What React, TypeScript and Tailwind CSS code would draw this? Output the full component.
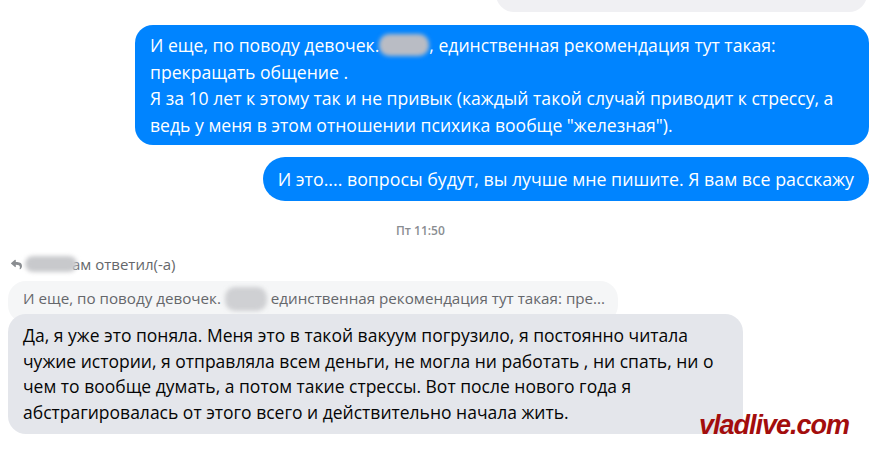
import React from "react";
import { FaReply } from "react-icons/fa";

const font = { fontFamily: '"Open Sans", "Noto Sans", sans-serif' };

function Blob({ className }: { className: string }) {
  return <span className={"inline-block align-middle rounded-[10px] blur-[2px] " + className} />;
}

export default function App() {
  return (
    <div className="relative w-[883px] h-[452px] overflow-hidden bg-white" style={font}>
      {/* top partial bubble */}
      <div className="flex justify-end pr-[16px]">
        <div className="h-[12px] overflow-hidden flex items-end">
          <div className="w-[371px] h-[40px] rounded-[18px] bg-[#f0f0f3]" />
        </div>
      </div>

      {/* outgoing 1 */}
      <div className="flex justify-end pr-[14px] mt-[13px]">
        <div className="w-[734px] rounded-[18px] bg-[#0084ff] text-white text-[17.6px] leading-[26.5px] pl-[15px] py-[7px] whitespace-nowrap">
          И еще, по поводу девочек.<Blob className="w-[50px] h-[22px] bg-[#b9bcc4] -mt-[4px]" />, единственная рекомендация тут такая:
          <br />
          прекращать общение .
          <br />
          Я за 10 лет к этому так и не привык (каждый такой случай приводит к стрессу, а
          <br />
          ведь у меня в этом отношении психика вообще "железная").
        </div>
      </div>

      {/* outgoing 2 */}
      <div className="flex justify-end pr-[14px] mt-[12px]">
        <div className="rounded-[22px] bg-[#0084ff] text-white text-[17.8px] leading-[26px] px-[15px] py-[9px] whitespace-nowrap">
          И это.... вопросы будут, вы лучше мне пишите. Я вам все расскажу
        </div>
      </div>

      {/* timestamp */}
      <div className="mt-[22px] pl-[396px] text-[12px] leading-[16px] font-semibold text-[#8a8d91]">Пт 11:50</div>

      {/* reply header */}
      <div className="mt-[16px] flex items-center pl-[11px] text-[15px] leading-[18px] text-[#65676b]">
        <FaReply className="w-[11px] h-[11px] text-[#8a8d91]" />
        <Blob className="w-[52px] h-[16px] bg-[#c8c9cc] ml-[3px]" />
        <span className="-ml-[5px]">ам ответил(-а)</span>
      </div>

      {/* quoted */}
      <div className="mt-[8px] pl-[8px]">
        <div className="w-[610px] h-[42px] rounded-[18px] bg-[#f5f6f7] pl-[15px] pt-[8px] text-[15.2px] leading-[18px] text-[#65676b] whitespace-nowrap">
          И еще, по поводу девочек. <Blob className="w-[42px] h-[24px] bg-[#cfd0d3] -mt-[2px]" /> единственная рекомендация тут такая: пре...
        </div>
      </div>

      {/* incoming */}
      <div className="-mt-[9px] pl-[8px] relative">
        <div className="w-[735px] rounded-[18px] bg-[#e4e6eb] text-[#050505] text-[17.5px] leading-[25.5px] pl-[15px] py-[9px] whitespace-nowrap">
          Да, я уже это поняла. Меня это в такой вакуум погрузило, я постоянно читала
          <br />
          чужие истории, я отправляла всем деньги, не могла ни работать , ни спать, ни о
          <br />
          чем то вообще думать, а потом такие стрессы. Вот после нового года я
          <br />
          абстрагировалась от этого всего и действительно начала жить.
        </div>
      </div>

      {/* watermark */}
      <div
        className="absolute left-[699px] top-[409px] text-[27px] leading-[32px] font-bold italic text-[#a30d0d] tracking-[-1px]"
        style={{ fontFamily: '"Liberation Sans", Arial, sans-serif' }}
      >
        vladlive.com
      </div>
    </div>
  );
}
